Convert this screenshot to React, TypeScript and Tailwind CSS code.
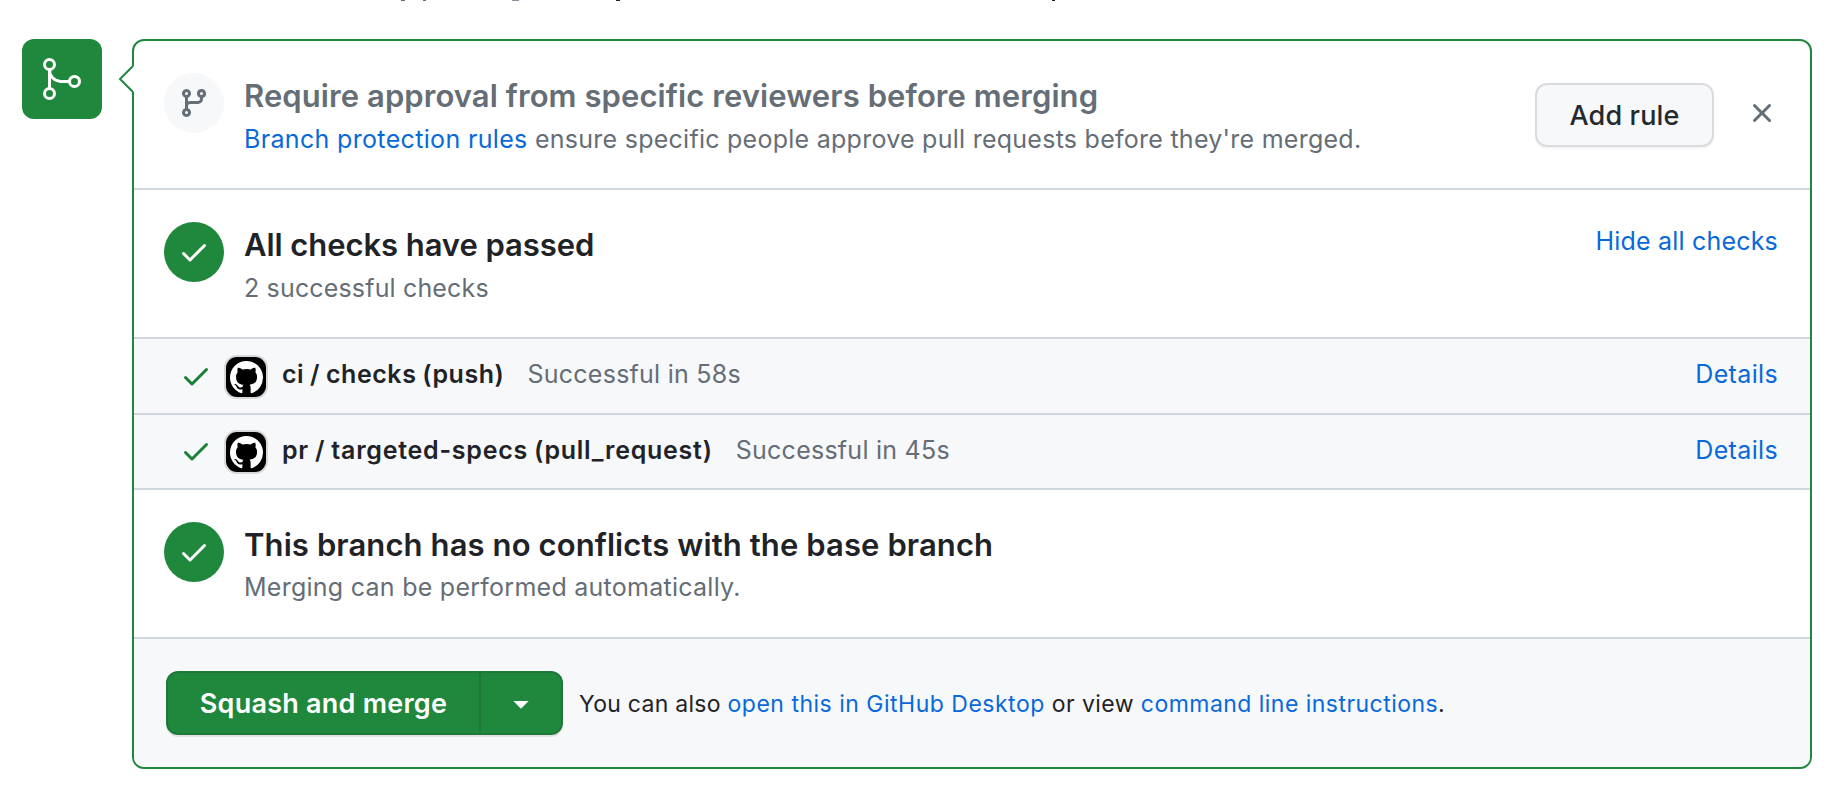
import type { ReactNode } from "react";

function CheckIcon({ className }: { className: string }) {
  return (
    <svg viewBox="0 0 16 16" className={className} fill="currentColor" aria-hidden="true">
      <path d="M13.78 4.22a.75.75 0 0 1 0 1.06l-7.25 7.25a.75.75 0 0 1-1.06 0L2.22 9.28a.751.751 0 0 1 .018-1.042.751.751 0 0 1 1.042-.018L6 10.94l6.72-6.72a.75.75 0 0 1 1.06 0Z" />
    </svg>
  );
}

function BranchIcon({ className }: { className: string }) {
  return (
    <svg viewBox="0 0 16 16" className={className} fill="currentColor" aria-hidden="true">
      <path d="M9.5 3.25a2.25 2.25 0 1 1 3 2.122V6A2.5 2.5 0 0 1 10 8.5H6a1 1 0 0 0-1 1v1.128a2.251 2.251 0 1 1-1.5 0V5.372a2.25 2.25 0 1 1 1.5 0v1.836A2.493 2.493 0 0 1 6 7h4a1 1 0 0 0 1-1v-.628A2.25 2.25 0 0 1 9.5 3.25Zm-6 0a.75.75 0 1 0 1.5 0 .75.75 0 0 0-1.5 0Zm8.25-.75a.75.75 0 1 0 0 1.5.75.75 0 0 0 0-1.5ZM4.25 12a.75.75 0 1 0 0 1.5.75.75 0 0 0 0-1.5Z" />
    </svg>
  );
}

function CloseIcon() {
  return (
    <svg viewBox="0 0 16 16" className="size-8" fill="currentColor" aria-hidden="true">
      <path d="M3.72 3.72a.75.75 0 0 1 1.06 0L8 6.94l3.22-3.22a.749.749 0 0 1 1.275.326.749.749 0 0 1-.215.734L9.06 8l3.22 3.22a.749.749 0 0 1-.326 1.275.749.749 0 0 1-.734-.215L8 9.06l-3.22 3.22a.751.751 0 0 1-1.042-.018.751.751 0 0 1-.018-1.042L6.94 8 3.72 4.78a.75.75 0 0 1 0-1.06Z" />
    </svg>
  );
}

function MergeBadge() {
  return (
    <div className="size-20 shrink-0 rounded-xl bg-[#1f883d]">
      <svg viewBox="0 0 80 80" className="size-20" fill="none" stroke="white" strokeWidth="3" aria-hidden="true">
        <circle cx="27.5" cy="25.5" r="5" />
        <circle cx="27.5" cy="54.5" r="5" />
        <circle cx="52.5" cy="42.4" r="5" />
        <path d="M27.5 30.5v19M27.5 31a11.4 11.4 0 0 0 11.4 11.4h8.6" />
      </svg>
    </div>
  );
}

function GithubAvatar() {
  return (
    <div className="flex size-10 items-center justify-center rounded-[11px] bg-black shadow-[0_0_0_2px_rgba(31,35,40,0.15)]">
      <svg viewBox="0 0 16 16" className="size-[33px]" fill="white" aria-hidden="true">
        <path d="M8 0C3.58 0 0 3.58 0 8c0 3.54 2.29 6.53 5.47 7.59.4.07.55-.17.55-.38 0-.19-.01-.82-.01-1.49-2.01.37-2.53-.49-2.69-.94-.09-.23-.48-.94-.82-1.13-.28-.15-.68-.52-.01-.53.63-.01 1.08.58 1.23.82.72 1.21 1.87.87 2.33.66.07-.52.28-.87.51-1.07-1.78-.2-3.64-.89-3.64-3.95 0-.87.31-1.59.82-2.15-.08-.2-.36-1.02.08-2.12 0 0 .67-.21 2.2.82.64-.18 1.32-.27 2-.27s1.36.09 2 .27c1.53-1.04 2.2-.82 2.2-.82.44 1.1.16 1.92.08 2.12.51.56.82 1.27.82 2.15 0 3.07-1.87 3.75-3.65 3.95.29.25.54.73.54 1.48 0 1.07-.01 1.93-.01 2.2 0 .21.15.46.55.38A8.01 8.01 0 0 0 16 8c0-4.42-3.58-8-8-8Z" />
      </svg>
    </div>
  );
}

function Link({ className = "", children }: { className?: string; children: ReactNode }) {
  return (
    <a href="#" className={`text-[#0969da] ${className}`}>
      {children}
    </a>
  );
}

function SuccessCircle() {
  return (
    <div className="flex size-[60px] shrink-0 items-center justify-center rounded-full bg-[#1f883d]">
      <CheckIcon className="size-8 text-white" />
    </div>
  );
}

function Section({ icon, title, text, aside }: { icon: ReactNode; title: ReactNode; text: ReactNode; aside?: ReactNode }) {
  return (
    <section className="flex h-[149px] items-start gap-5 border-b-2 border-[#d0d7de] pt-8 pr-8 pl-[30px]">
      {icon}
      <div className="flex grow flex-col whitespace-nowrap">
        {title}
        {text}
      </div>
      {aside}
    </section>
  );
}

const checks = [
  {
    name: "ci / checks (push)",
    result: "Successful in 58s",
    row: "h-[76px]",
    icons: "mt-[18px]",
    nameSpacing: "tracking-[0.55px] [word-spacing:-1px]",
    resultSpacing: "tracking-[0.25px]",
  },
  {
    name: "pr / targeted-specs (pull_request)",
    result: "Successful in 45s",
    row: "h-[75px]",
    icons: "mt-[17px]",
    nameSpacing: "tracking-[0.75px] [word-spacing:-1px]",
    resultSpacing: "tracking-[0.25px]",
  },
];

export default function App() {
  return (
    <div className="h-[786px] w-[1836px] overflow-hidden bg-white font-['Inter',sans-serif] text-[25px] leading-10 text-[#1f2328]">
      <div className="flex h-[39px] items-start pl-[401px]">
        <span className="h-px w-1 bg-[#656d76]" />
        <span className="ml-[18px] h-px w-[3px] bg-[#656d76]" />
        <span className="ml-[86px] h-px w-[7px] bg-[#8a90a0]" />
        <span className="ml-[97px] h-px w-1 bg-[#1f2328]" />
        <span className="ml-[432px] h-px w-[3px] bg-[#1f2328]" />
      </div>

      <div className="flex items-start gap-[30px] pl-[22px]">
        <MergeBadge />

        <div className="relative w-[1680px] shrink-0 rounded-xl border-2 border-[#1f883d]">
          <svg viewBox="0 0 20 36" className="absolute top-[20px] -left-[18px] h-9 w-5" aria-hidden="true">
            <path d="M17 5H18V31H17L4 18Z" fill="white" />
            <path d="M17 5 4 18 17 31" fill="none" stroke="#1f883d" strokeWidth="2" />
          </svg>

          <Section
            icon={
              <div className="flex size-[60px] shrink-0 items-center justify-center rounded-full bg-[#f6f8fa]">
                <BranchIcon className="size-8 text-[#656d76]" />
              </div>
            }
            title={
              <h3 className="text-[31px] leading-[46px] font-semibold tracking-[0.08px] text-[#656d76]">
                Require approval from specific reviewers before merging
              </h3>
            }
            text={
              <p className="tracking-[0.26px] text-[#656d76]">
                <Link className="tracking-[0.34px]">Branch protection rules</Link> ensure specific people approve pull
                requests before they're merged.
              </p>
            }
            aside={
              <div className="flex items-start gap-8 pt-[10px]">
                <button className="h-16 w-[179px] rounded-xl border-2 border-[#d9dbde] bg-[#f6f8fa] pt-px text-[27px] font-medium tracking-[0.13px] text-[#24292f] shadow-[0_2px_0_rgba(31,35,40,0.04)]">
                  Add rule
                </button>
                <button className="mt-[14px] text-[#656d76]" aria-label="Dismiss">
                  <CloseIcon />
                </button>
              </div>
            }
          />

          <Section
            icon={<SuccessCircle />}
            title={
              <h3 className="text-[31px] leading-[46px] font-semibold tracking-[-0.07px]">All checks have passed</h3>
            }
            text={<p className="tracking-[0.16px] text-[#656d76]">2 successful checks</p>}
            aside={<Link className="-mt-px tracking-[0.2px] whitespace-nowrap">Hide all checks</Link>}
          />

          {checks.map((check) => (
            <div
              key={check.name}
              className={`flex items-start border-b-2 border-[#d0d7de] bg-[#f6f8fa] pr-8 pl-[46px] whitespace-nowrap ${check.row}`}
            >
              <div className={`flex items-center gap-[14px] ${check.icons}`}>
                <CheckIcon className="mb-0.5 size-8 text-[#1a7f37]" />
                <GithubAvatar />
              </div>
              <div className="mt-[15px] ml-4 flex grow gap-[23px]">
                <strong className={`font-semibold ${check.nameSpacing}`}>{check.name}</strong>
                <span className={`text-[#656d76] ${check.resultSpacing}`}>{check.result}</span>
              </div>
              <Link className="mt-[15px] tracking-[0.35px]">Details</Link>
            </div>
          ))}

          <Section
            icon={<SuccessCircle />}
            title={
              <h3 className="text-[31px] leading-[46px] font-semibold tracking-[0.1px]">
                This branch has no conflicts with the base branch
              </h3>
            }
            text={
              <p className="-mt-px tracking-[0.26px] text-[#656d76]">Merging can be performed automatically.</p>
            }
          />

          <footer className="flex h-32 items-center gap-4 rounded-b-[10px] bg-[#f6f8fa] pl-8 whitespace-nowrap">
            <div className="flex h-16 rounded-xl text-white shadow-[0_2px_0_rgba(31,35,40,0.1)]">
              <button className="w-[315px] rounded-l-xl border-2 border-[#1e7839] bg-[#1f883d] pt-px text-[27px] font-semibold tracking-[0.24px]">
                Squash and merge
              </button>
              <button
                className="flex w-[82px] items-center justify-center rounded-r-xl border-2 border-l-0 border-[#1e7839] bg-[#1f883d]"
                aria-label="Select merge method"
              >
                <svg viewBox="0 0 16 8" className="mt-1 h-2 w-4" fill="currentColor" aria-hidden="true">
                  <path d="M.4 0h15.2L8 7.8Z" />
                </svg>
              </button>
            </div>
            <p className="pt-px text-[23px] tracking-[0.43px]">
              <span className="tracking-[0.28px]">You can also </span>
              <Link className="tracking-[0.5px]">open this in GitHub Desktop</Link> or view{" "}
              <Link className="tracking-[0.46px]">command line instructions</Link>.
            </p>
          </footer>
        </div>
      </div>
    </div>
  );
}
